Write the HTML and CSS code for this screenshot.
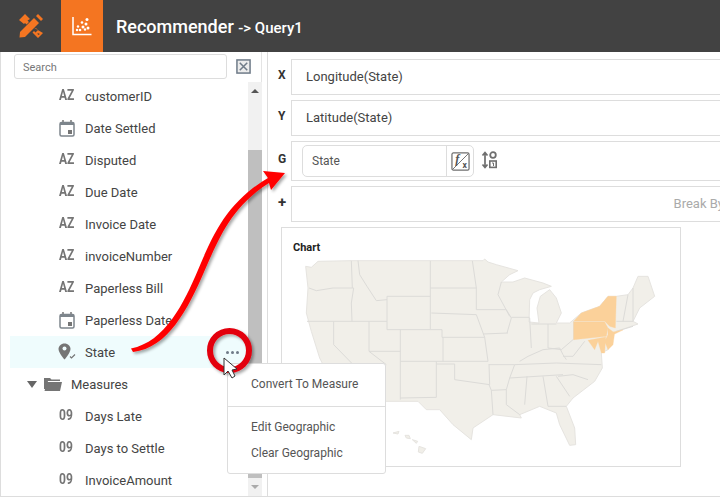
FILE: index.html
```html
<!DOCTYPE html>
<html lang="en">
<head>
  <meta charset="UTF-8" />
  <title>Recommender</title>
  <link rel="stylesheet" href="styles.css">
</head>
<body>

  <!-- top bar -->
  <header class="topbar">
    <div class="brand">
      <svg width="26" height="26" viewBox="0 0 26 26">
        <path d="M1 7 7 1 12 6 9.500 7.500 11 9 8.500 11.500 7 10 6 11Z" fill="#f47521"/>
        <path d="M15.500 14.500 25 20 20 25 14.500 19.500 16 18 17.500 19.500 20 17 18.500 15.500Z M19.500 20 20 22 22 21Z" fill="#f47521" fill-rule="evenodd"/>
        <path d="M2 19 16 5 21 10 7 24 1.500 24.500Z" fill="#f47521"/>
        <path d="M18 3 20 1 25 6 23 8Z" fill="#f47521"/>
      </svg>
    </div>
    <div class="tab">
      <svg width="20" height="20" viewBox="0 0 20 20">
        <path d="M1 1V18.500H19.500" fill="none" stroke="#fff" stroke-width="1.500"/>
        <g fill="#fff">
          <circle cx="5" cy="14" r="1.200"/><circle cx="8" cy="14" r="1.300"/><circle cx="6" cy="10.500" r="1.200"/>
          <circle cx="11" cy="11" r="1.500"/><circle cx="14" cy="8" r="1.500"/><circle cx="16" cy="12" r="1.500"/>
          <circle cx="13" cy="13.500" r="1.200"/><circle cx="15" cy="3.500" r="1.500"/><circle cx="10" cy="6.500" r="1.300"/>
        </g>
      </svg>
    </div>
    <h1 class="title">Recommender <small>-&gt; Query1</small></h1>
  </header>

  <div class="layout">
    <!-- field list -->
    <aside class="sidebar">
      <div class="search-row">
        <input class="search" type="text" placeholder="Search">
        <svg class="close-box" width="15" height="15" viewBox="0 0 16 16">
          <rect x="1" y="1" width="14" height="14" fill="#ececec" stroke="#6f7b88" stroke-width="1.600"/>
          <path d="M4 4 12 12M12 4 4 12" stroke="#6f7b88" stroke-width="1.600"/>
        </svg>
      </div>
      <div class="tree-wrap">
        <ul class="tree">
          <li class="field"><span class="type">AZ</span>customerID</li>
          <li class="field"><svg class="cal" width="16" height="17" viewBox="0 0 16 17"><use href="#calendar"/></svg>Date Settled</li>
          <li class="field"><span class="type">AZ</span>Disputed</li>
          <li class="field"><span class="type">AZ</span>Due Date</li>
          <li class="field"><span class="type">AZ</span>Invoice Date</li>
          <li class="field"><span class="type">AZ</span>invoiceNumber</li>
          <li class="field"><span class="type">AZ</span>Paperless Bill</li>
          <li class="field"><svg class="cal" width="16" height="17" viewBox="0 0 16 17"><use href="#calendar"/></svg>Paperless Date</li>
          <li class="field selected">
            <svg class="pin" width="18" height="17" viewBox="0 0 18 17">
              <path d="M6.500 0.500C3 0.500 .5 3 .5 6C.5 10 6.500 16.500 6.500 16.500S12.500 10 12.500 6C12.500 3 10 .5 6.500 .5Z" fill="#757575"/>
              <circle cx="6.500" cy="5.500" r="2" fill="#effcfd"/>
              <path d="M12 13.500 13.500 15 17 11.500" fill="none" stroke="#757575" stroke-width="1.200"/>
            </svg>State<span class="more"><i></i><i></i><i></i></span>
          </li>
          <li class="folder">
            <span class="caret"></span>
            <svg class="folder-icon" width="18" height="14" viewBox="0 0 18 14">
              <path d="M0 1H6L7.500 2.500H16V4H4L2 12H1L0 12Z" fill="#757575"/>
              <path d="M3 5H18L16 14H.5Z" fill="#757575"/>
            </svg>Measures
          </li>
          <li class="field"><span class="type">09</span>Days Late</li>
          <li class="field"><span class="type">09</span>Days to Settle</li>
          <li class="field"><span class="type">09</span>InvoiceAmount</li>
        </ul>
        <div class="scrollbar">
          <span class="arrow up"></span>
          <div class="thumb"></div>
          <span class="arrow down"></span>
        </div>
      </div>
    </aside>
    <div class="splitter"></div>

    <!-- query slots -->
    <main class="query">
      <div class="slot"><b>X</b><div class="box">Longitude(State)</div></div>
      <div class="slot"><b>Y</b><div class="box">Latitude(State)</div></div>
      <div class="slot"><b>G</b>
        <div class="box box-g">
          <div class="pill">
            <span class="pill-text">State</span>
            <span class="pill-btn">
              <svg width="19" height="19" viewBox="0 0 20 20">
                <rect x="1" y="1" width="18" height="18" rx="1.500" fill="none" stroke="#6f6f6f" stroke-width="1.300"/>
                <path d="M1.500 18.500 18.500 1.500" stroke="#6f6f6f"/>
                <text x="4.500" y="12" class="fx-f">f</text>
                <text x="12" y="17" class="fx-x">x</text>
              </svg>
            </span>
          </div>
          <svg class="sort" width="17" height="18" viewBox="0 0 17 18">
            <path d="M4 2V16M1.500 4.500 4 1.500 6.500 4.500M1.500 13.500 4 16.500 6.500 13.500" fill="none" stroke="#6f6f6f" stroke-width="1.700"/>
            <circle cx="12" cy="4" r="2.800" fill="none" stroke="#6f6f6f" stroke-width="1.800"/>
            <rect x="8.800" y="10" width="6.400" height="6.400" fill="none" stroke="#6f6f6f" stroke-width="1.600"/>
            <path d="M11 12H12.500V15" fill="none" stroke="#6f6f6f"/>
          </svg>
        </div>
      </div>
      <div class="slot"><b class="plus">+</b><div class="box box-break">Break By</div></div>

      <section class="chart">
        <h3>Chart</h3>
        <svg class="map" width="355" height="200" viewBox="70 100 1065 600">
          <path class="land" d="M78 125 95 128 115 110 215 108H452L578 108H610L615 103 625 112 650 120 715 138 690 150 665 172 700 172 735 160 790 175 815 185 780 195 760 205 750 225 748 292 778 295 772 250 782 215 810 195 830 220 845 265 830 295 870 295 905 265 960 245 985 215 1010 215 1045 210 1060 190 1075 155 1105 155 1125 215 1080 250 1060 290 1075 298 1010 320 990 340 985 375 965 385 968 430 945 470 880 520 860 545 885 610 888 660 870 662 840 600 830 565 780 545 720 570 725 580 640 570 580 610 575 645 520 600 480 555 440 555 415 530H300L200 520 140 440 120 400 95 320 80 265 85 190Z"/>
          <path class="land" d="M340 625 358 620 355 628ZM376 632 388 632 392 642 380 640ZM398 645 414 650 410 656ZM418 665 438 672 428 686 416 682Z"/>
          <path class="lines" d="M88 190 110 198 160 190 222 190M215 108 218 190M235 108 240 150 262 185 290 228 322 225M322 215H452M452 108V315M222 190 215 235 217 290M82 290H322M322 215V315H452M452 190H590M578 108 590 190V255H680M455 265 590 270 615 338M452 315H487V338H615M665 172 655 210 690 275M695 278H750M680 255 695 280 682 325M610 328 685 325M750 280 755 370M755 298H830M805 298V370M882 290V345M720 410 745 395 790 375 840 370 850 390 860 405M805 370 845 375 880 345M850 395 880 395 915 350M705 420 830 415 965 420M690 460 850 450M490 338V410H625M615 338 625 410M362 315V525M362 410H490M362 520 470 518V410M470 418H525V465L630 480 628 418M628 420H705L690 460 680 495 635 497 628 480M635 497 640 570M680 495 680 540 720 570M742 455 735 540M790 455 805 545M830 455 870 515M805 545H860M835 455 880 450 925 465M268 290V380H362M162 290V360L240 440M268 380 320 420M1010 290H1060M1030 290 1045 210M1060 290V190M1010 320 1060 305"/>
          <path class="region" d="M905 265 960 245 985 215H1010L1007 310 990 305 975 290H882ZM882 292H975L985 310 980 335 882 345ZM985 310 1005 325 1000 360 985 375 975 350 985 330ZM925 347 978 337 975 385 965 385 955 350 945 375ZM1000 322 1030 316 1005 328Z"/>
        </svg>
      </section>
    </main>
  </div>

  <!-- context menu -->
  <div class="menu">
    <div class="menu-item">Convert To Measure</div>
    <hr>
    <div class="menu-item">Edit Geographic</div>
    <div class="menu-item">Clear Geographic</div>
  </div>

  <!-- callout drawn over the screenshot -->
  <svg class="callout" width="720" height="497" viewBox="0 0 720 497">
    <defs>
      <filter id="soft" x="-20%" y="-20%" width="140%" height="140%">
        <feDropShadow dx="2" dy="2" stdDeviation="1.500" flood-color="#000" flood-opacity=".35"/>
      </filter>
      <symbol id="calendar" viewBox="0 0 16 17">
        <path d="M4 0V3M12 0V3" stroke="#757575" stroke-width="1.500"/>
        <rect x="1" y="2.500" width="14" height="13.500" rx="1.500" fill="none" stroke="#7d858c" stroke-width="1.500"/>
        <rect x="1" y="3" width="14" height="2" fill="#7d858c"/>
        <rect x="9" y="10" width="4" height="4" fill="#757575"/>
      </symbol>
    </defs>
    <g filter="url(#soft)">
      <path d="M131 348.500C165 342 184 303 198 270 213 235 226 203 268 178L263 171 285 173 271 190 269 183C231 207 219 238 204 272 188 309 168 348 133 352Z" fill="#f00"/>
      <circle cx="229.500" cy="350.500" r="19.500" fill="none" stroke="#e3000f" stroke-width="6"/>
    </g>
    <path d="M224 358V375L228 371 232 378 235 376 232 370 237 369Z" fill="#fff" stroke="#333"/>
  </svg>

</body>
</html>
```

FILE: styles.css
```css
* {
  box-sizing: border-box;
}

html, body {
  height: 497px;
}

body {
  margin: 0;
  font-family: Roboto, Arial, sans-serif;
  font-size: 13px;
  color: #444;
  background-color: #fff;
  overflow: hidden;
  position: relative;
}

.topbar {
  height: 52px;
  background-color: #424242;
  display: flex;
  align-items: center;
}

.brand {
  width: 61px;
  display: flex;
  justify-content: center;
}

.tab {
  width: 42px;
  height: 52px;
  background-color: #f47521;
  display: flex;
  justify-content: center;
  align-items: center;
}

.title {
  margin: 0 0 0 13px;
  font-size: 18px;
  font-weight: 500;
  color: #fff;
}

.title small {
  font-size: 15px;
}

.layout {
  display: flex;
  height: 445px;
  border-left: 1px solid #ddd;
  border-bottom: 1px solid #ddd;
}

.sidebar {
  width: 261px;
  flex: none;
  border-right: 1px solid #e4e4e4;
}

.splitter {
  width: 6px;
  flex: none;
  border-right: 1px solid #ddd;
}

.search-row {
  height: 28px;
  padding: 2px 10px 0 13px;
  display: flex;
  align-items: flex-start;
  justify-content: space-between;
}

.search {
  width: 213px;
  height: 25px;
  padding: 2px 8px 0;
  border: 1px solid #ddd;
  border-radius: 3px;
  font-family: Roboto, Arial, sans-serif;
  font-size: 11px;
}

.search::placeholder {
  color: #777;
}

.close-box {
  margin-top: 5px;
}

.tree-wrap {
  display: flex;
  height: 416px;
}

.tree {
  list-style: none;
  margin: 0;
  padding: 0 0 0 9px;
  width: 247px;
  flex: none;
}

.field, .folder {
  height: 32px;
  display: flex;
  align-items: center;
  position: relative;
}

.field {
  padding-left: 49px;
}

.folder {
  padding-left: 17px;
}

.type {
  display: inline-block;
  width: 26px;
  font-weight: 700;
  font-size: 14px;
  color: #757575;
  margin-top: -3px;
  flex: none;
  transform: scaleX(.86);
  transform-origin: left center;
}

.cal {
  width: 16px;
  margin-right: 10px;
  flex: none;
}

.pin {
  width: 18px;
  margin-right: 9px;
  margin-left: -1px;
  margin-top: -1px;
  flex: none;
}

.selected {
  background-color: #effcfd;
}

.more {
  position: absolute;
  right: 9px;
  top: 15px;
  display: flex;
  gap: 2px;
}

.more i {
  width: 3px;
  height: 3px;
  border-radius: 50%;
  background-color: #6f7b88;
}

.caret {
  width: 0;
  height: 0;
  border-left: 5px solid transparent;
  border-right: 5px solid transparent;
  border-top: 7px solid #666;
  margin-right: 7px;
}

.folder-icon {
  margin-right: 9px;
}

.scrollbar {
  width: 14px;
  margin-top: 2px;
  background-color: #f1f1f1;
  position: relative;
  display: flex;
  flex-direction: column;
  align-items: center;
}

.arrow {
  width: 0;
  height: 0;
  border-left: 4px solid transparent;
  border-right: 4px solid transparent;
}

.arrow.up {
  margin-top: 7px;
  border-bottom: 4px solid #555;
}

.arrow.down {
  border-top: 4px solid #aaa;
}

.thumb {
  width: 14px;
  height: 328px;
  margin: 57px 0 7px;
  background-color: #bfbfbf;
}

.query {
  flex: 1;
  min-width: 0;
  padding-top: 7px;
  display: flex;
  flex-direction: column;
  gap: 5px;
  overflow: hidden;
}

.slot {
  display: flex;
  align-items: center;
  padding-left: 10px;
}

.slot b {
  width: 13px;
  flex: none;
  font-size: 12px;
  color: #333;
  margin-top: -4px;
}

.slot .plus {
  font-size: 15px;
}

.box {
  flex: 1;
  height: 36px;
  margin-right: -30px;
  padding: 0 0 2px 14px;
  border: 1px solid #ddd;
  display: flex;
  align-items: center;
}

.box-g {
  height: 40px;
  padding: 0 0 0 10px;
}

.box-break {
  justify-content: flex-end;
  padding-right: 25px;
  color: #aaa;
}

.pill {
  width: 172px;
  height: 32px;
  border: 1px solid #ddd;
  border-radius: 5px;
  display: flex;
  align-items: center;
  font-size: 12px;
  color: #555;
}

.pill-text {
  flex: 1;
  padding-left: 9px;
}

.pill-btn {
  width: 27px;
  height: 100%;
  border-left: 1px solid #ddd;
  display: flex;
  align-items: center;
  justify-content: center;
}

.fx-f {
  font-family: "Liberation Serif", serif;
  font-style: italic;
  font-weight: 700;
  font-size: 13px;
  fill: #555;
}

.fx-x {
  font-size: 9px;
  font-weight: 700;
  fill: #555;
}

.sort {
  margin-left: 7px;
  margin-top: -2px;
}

.chart {
  width: 400px;
  height: 240px;
  margin-left: 13px;
  border: 1px solid #ddd;
}

.chart h3 {
  margin: 13px 0 0 11px;
  font-size: 11px;
  font-weight: 700;
  line-height: 13px;
  color: #222;
}

.map {
  display: block;
  margin: 4px 0 0 21px;
}

.land {
  fill: #f1efe9;
  stroke: #e6e4e0;
  stroke-width: 3;
}

.lines {
  fill: none;
  stroke: #dcdbd8;
  stroke-width: 3;
}

.region {
  fill: #fbd19a;
  stroke: #fbd19a;
  stroke-width: 1;
}

.menu {
  position: absolute;
  left: 227px;
  top: 363px;
  width: 159px;
  height: 111px;
  background-color: #fff;
  border: 1px solid #ddd;
  border-radius: 3px;
  padding-top: 8px;
  font-size: 12px;
  color: #555;
}

.menu hr {
  margin: 8px 0;
  border: 0;
  border-top: 1px solid #ddd;
}

.menu-item {
  height: 26px;
  line-height: 24px;
  padding-left: 23px;
}

.callout {
  position: absolute;
  left: 0;
  top: 0;
  pointer-events: none;
}
```
